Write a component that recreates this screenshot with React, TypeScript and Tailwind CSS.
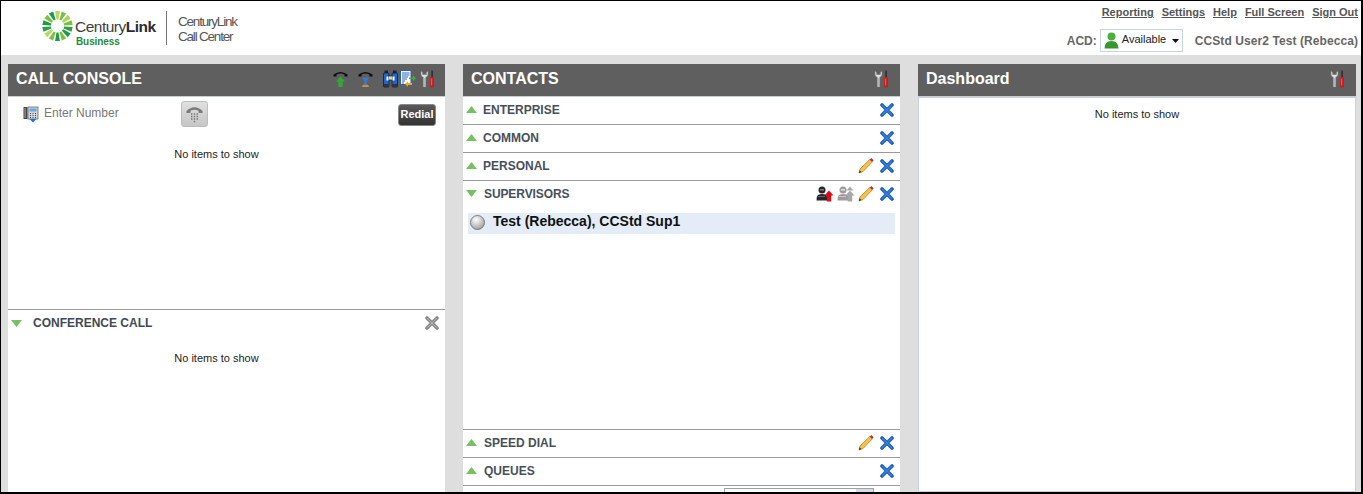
import React from "react";

const font = { fontFamily: '"Liberation Sans", Arial, sans-serif' };

function Tools() {
  return (
    <svg width="16" height="18" viewBox="0 0 16 18" className="shrink-0">
      <path d="M1 1 L1 4.5 Q1 6.6 3.2 7.2 L3.2 17 L5.8 17 L5.8 7.2 Q8 6.6 8 4.5 L8 1 L6.4 2.4 L6.4 4.5 L2.6 4.5 L2.6 2.4 Z" fill="#dedede" stroke="#777" strokeWidth="0.5" />
      <path d="M4.2 8 L4.2 16.5" stroke="#9c9c9c" strokeWidth="0.9" />
      <rect x="11.4" y="0.5" width="1.4" height="6.5" fill="#2a2a2a" />
      <rect x="10.2" y="7" width="3.8" height="10.5" rx="1" fill="#d2171d" />
      <rect x="11.2" y="8.5" width="0.9" height="7" fill="#f06a6a" />
    </svg>
  );
}

function BlueX() {
  return (
    <svg width="14" height="14" viewBox="0 0 14 14" className="shrink-0">
      <path d="M2 2 L12 12 M12 2 L2 12" stroke="#1d5fc0" strokeWidth="3.6" strokeLinecap="round" />
      <path d="M2.5 2.5 L11.5 11.5 M11.5 2.5 L2.5 11.5" stroke="#3f80dc" strokeWidth="1.2" strokeLinecap="round" />
    </svg>
  );
}

function GrayX() {
  return (
    <svg width="14" height="14" viewBox="0 0 14 14" className="shrink-0">
      <path d="M2 2 L12 12 M12 2 L2 12" stroke="#8b8b8b" strokeWidth="3.6" strokeLinecap="round" />
      <path d="M2.5 2.5 L11.5 11.5 M11.5 2.5 L2.5 11.5" stroke="#b5b5b5" strokeWidth="1" strokeLinecap="round" />
    </svg>
  );
}

function Pencil() {
  return (
    <svg width="16" height="17" viewBox="0 0 16 17" className="shrink-0">
      <path d="M1 16 L2 12 L11.8 2.4 L14.2 5 L5 14.6 Z" fill="#f4c246" stroke="#a9761c" strokeWidth="0.7" />
      <path d="M11.8 2.4 L13.4 1 L15.6 3.2 L14.2 5 Z" fill="#b5303c" />
      <path d="M1 16 L1.6 13.4 L3.4 15 Z" fill="#222" />
    </svg>
  );
}

function Person({ gray }: { gray?: boolean }) {
  const body = gray ? "#9c9c9c" : "#262626";
  const arrow = gray ? "#a8a8a8" : "#e00b12";
  return (
    <svg width="18" height="16" viewBox="0 0 18 16" className="shrink-0">
      <circle cx="6" cy="4" r="3.5" fill={body} />
      <rect x="4" y="3" width="4" height="1.6" fill={gray ? "#dcdcdc" : "#777"} />
      <path d="M0.5 14.5 L0.8 11 Q1.5 8 6 8 Q10 8 11 10 L11 14.5 Z" fill={body} />
      <path d="M2 10 H9 V11 H2 Z" fill={gray ? "#c8c8c8" : "#666"} />
      <path d="M13 4.5 L17.5 9.5 L15.2 9.5 L15.2 15.5 L10.8 15.5 L10.8 9.5 L8.5 9.5 Z" fill={arrow} />
      {gray ? <path d="M13 0.5 L16.5 4.5 L9.5 4.5 Z" fill={arrow} /> : null}
    </svg>
  );
}

function Triangle({ down }: { down?: boolean }) {
  return (
    <svg width="11" height="7" viewBox="0 0 11 7" className="shrink-0">
      <path d={down ? "M0 0 L11 0 L5.5 7 Z" : "M0 7 L11 7 L5.5 0 Z"} fill="#77c062" />
    </svg>
  );
}

function Handset() {
  return <path d="M0.5 4.5 Q7.5 -0.5 14.5 4.5 L14.5 6.5 L11.5 6.5 L11.5 4.6 Q7.5 2.4 3.5 4.6 L3.5 6.5 L0.5 6.5 Z" fill="#0d0d0d" />;
}

function PhoneUp() {
  return (
    <svg width="15" height="18" viewBox="0 0 15 18" className="shrink-0">
      <Handset />
      <path d="M7.5 6.5 L12 11.5 L9.7 11.5 L9.7 17 L5.3 17 L5.3 11.5 L3 11.5 Z" fill="#33a838" />
    </svg>
  );
}

function PhoneWait() {
  return (
    <svg width="15" height="18" viewBox="0 0 15 18" className="shrink-0">
      <Handset />
      <path d="M4 7.5 L11 7.5 L8.4 12 L11 17 L4 17 L6.6 12 Z" fill="#3f78c5" />
      <path d="M4.8 15 L10.2 15 L11 17 L4 17 Z" fill="#d18f2f" />
    </svg>
  );
}

function Binoculars() {
  return (
    <svg width="15" height="18" viewBox="0 0 15 18" className="shrink-0">
      <rect x="1.5" y="0.5" width="3.5" height="3" fill="#222" />
      <rect x="10" y="0.5" width="3.5" height="3" fill="#222" />
      <rect x="0.5" y="3" width="5.5" height="14" rx="1" fill="#1f66cc" stroke="#111" strokeWidth="0.7" />
      <rect x="9" y="3" width="5.5" height="14" rx="1" fill="#1f66cc" stroke="#111" strokeWidth="0.7" />
      <rect x="5.5" y="6" width="4" height="4" fill="#cfcfcf" stroke="#111" strokeWidth="0.6" />
      <rect x="3.5" y="6.5" width="2" height="4" fill="#fff" />
      <rect x="9.5" y="6.5" width="2" height="4" fill="#fff" />
      <rect x="0.8" y="14" width="4.8" height="3" fill="#333" />
      <rect x="9.3" y="14" width="4.8" height="3" fill="#333" />
    </svg>
  );
}

function Transfer() {
  return (
    <svg width="16" height="18" viewBox="0 0 16 18" className="shrink-0">
      <rect x="0.5" y="0.5" width="10.5" height="14" fill="#fff" stroke="#2a62b8" />
      <path d="M2 3 H9.5 M2 5 H9.5 M2 7 H8 M2 9 H7 M2 11 H5 M2 13 H4" stroke="#2a62b8" strokeWidth="1.1" />
      <path d="M9 7.5 H13 V5.5 L16 8.2 L13 11 V9 H9 Z" fill="#3db13d" />
      <path d="M12 13 H8 V11.2 L5 14 L8 16.8 V15 H12 Z" fill="#efa91e" />
    </svg>
  );
}

function DeskPhone() {
  return (
    <svg width="16" height="17" viewBox="0 0 16 17" className="shrink-0">
      <rect x="0.5" y="1" width="4" height="12" fill="#444" />
      <rect x="1.5" y="2" width="1.2" height="10" fill="#999" />
      <rect x="5" y="1" width="10" height="12" fill="#d3d6da" stroke="#555" strokeWidth="0.7" />
      <rect x="6.5" y="2.5" width="7" height="3" fill="#6aa5dc" />
      <path d="M7 7.5 H8 M9.5 7.5 H10.5 M12 7.5 H13 M7 9.5 H8 M9.5 9.5 H10.5 M12 9.5 H13 M7 11.5 H8 M9.5 11.5 H10.5 M12 11.5 H13" stroke="#444" />
      <path d="M6.5 13 L13.5 13 L10 16.5 Z" fill="#1f6fd0" />
    </svg>
  );
}

function DialButton() {
  return (
    <div className="w-[27px] h-[26px] rounded-[3px] border border-[#bdbdbd] bg-gradient-to-b from-[#e0e0e0] to-[#c6c6c6] flex items-center justify-center">
      <svg width="17" height="18" viewBox="0 0 17 18">
        <path d="M0.5 6 Q8.5 -1.5 16.5 6 L16.5 8 L12.8 8 L12.3 5.6 Q8.5 4 4.7 5.6 L4.2 8 L0.5 8 Z" fill="#7a7a7a" />
        <path d="M5 9 H6.4 M7.8 9 H9.2 M10.6 9 H12 M5 11.5 H6.4 M7.8 11.5 H9.2 M10.6 11.5 H12 M5 14 H6.4 M7.8 14 H9.2 M10.6 14 H12 M7.8 16.5 H9.2" stroke="#777" strokeWidth="1.3" />
      </svg>
    </div>
  );
}

function Logo() {
  const rays = Array.from({ length: 14 }, (_, i) => (i * 360) / 14);
  const colors = ["#b5d96a", "#7ac143", "#a9d45c", "#7ac143", "#2f9e44", "#1e9a46", "#7ac143", "#1e9a46", "#7ac143", "#b5d96a", "#2f9e44", "#1e9a46", "#7ac143", "#1e9a46"];
  return (
    <div className="flex items-start">
      <svg width="31" height="32" viewBox="0 0 30 32" className="shrink-0">
        {rays.map((a, i) => (
          <path key={a} d="M12.6 1 L17.4 1 L16 9.5 L14 9.5 Z" fill={colors[i]} transform={`rotate(${a} 15 16)`} />
        ))}
      </svg>
      <div className="ml-[2px] mt-[9px] flex flex-col w-[92px]">
        <div className="text-[15.5px] leading-[16px] tracking-[-0.5px] text-[#3e3e3e] whitespace-nowrap">
          Century<span className="font-bold text-[#2c2c2c]">Link</span>
        </div>
        <div className="ml-[1px] text-[10px] tracking-[-0.1px] leading-[12px] mt-[1px] font-bold text-[#1f8a3c]">Business</div>
      </div>
    </div>
  );
}

function Section({ title, down, children, dark, gap = "ml-[6px]" }: { title: string; down?: boolean; children?: React.ReactNode; dark?: boolean; gap?: string }) {
  return (
    <div className="h-[28px] border-b border-[#9a9a9a] flex items-center pl-[3px] pr-[6px] pb-[2px] shrink-0">
      <Triangle down={down} />
      <span className={`${gap} text-[12px] font-bold ${dark ? "text-[#3f4a55]" : "text-[#46505a]"}`}>{title}</span>
      <div className="ml-auto flex items-center gap-[6px]">{children}</div>
    </div>
  );
}

function PanelHeader({ title, children, pr }: { title: string; children?: React.ReactNode; pr: string }) {
  return (
    <div className={`h-[33px] bg-[#5f5f5f] border-b border-[#c9ccd0] flex items-center pl-[8px] ${pr} pb-[2px] shrink-0`}>
      <span className="text-[16px] font-bold text-white">{title}</span>
      <div className="ml-auto flex items-center">{children}</div>
    </div>
  );
}

function Empty({ className = "" }: { className?: string }) {
  return <div className={`text-[11px] text-[#222] text-center ${className}`}>No items to show</div>;
}

export default function App() {
  return (
    <div style={font} className="w-[1363px] h-[494px] overflow-hidden bg-[#dedede] border-t border-l border-r-2 border-b-2 border-black flex flex-col">
      <header className="h-[54px] bg-white flex shrink-0">
        <div className="pl-[41px] pt-[9px]">
          <Logo />
        </div>
        <div className="ml-[-1px] mt-[10px] w-px h-[34px] bg-[#777]" />
        <div className="ml-[11px] mt-[13px] text-[13.5px] leading-[15px] tracking-[-1.2px] text-[#555]">
          <div>CenturyLink</div>
          <div>Call Center</div>
        </div>
        <div className="ml-auto pr-[3px] flex flex-col items-end">
          <div className="mt-[5px] flex gap-[8px] text-[11px] font-bold text-[#555] underline leading-[13px]">
            <span>Reporting</span>
            <span>Settings</span>
            <span>Help</span>
            <span>Full Screen</span>
            <span>Sign Out</span>
          </div>
          <div className="mt-[10px] flex items-center">
            <span className="text-[12px] font-bold text-[#666]">ACD:</span>
            <div className="ml-[3px] w-[83px] h-[23px] border border-[#c8d4e2] flex items-center pl-[3px]">
              <svg width="15" height="17" viewBox="0 0 15 17" className="shrink-0">
                <circle cx="7.5" cy="4.5" r="4" fill="#4cae3c" />
                <path d="M0.5 16.5 Q0.5 9 7.5 9 Q14.5 9 14.5 16.5 Z" fill="#35982f" />
              </svg>
              <span className="ml-[3px] text-[11px] text-[#222] mb-[3px]">Available</span>
              <svg width="7" height="4" viewBox="0 0 7 4" className="ml-auto mr-[3px]">
                <path d="M0 0 H7 L3.5 4 Z" fill="#111" />
              </svg>
            </div>
            <span className="ml-[12px] text-[12px] tracking-[0.08px] font-bold text-[#666]">CCStd User2 Test (Rebecca)</span>
          </div>
        </div>
      </header>

      <main className="flex-1 min-h-0 flex gap-[18px] pl-[7px] pr-[5px] pt-[9px]">
        <section className="w-[437px] flex flex-col min-h-0">
          <PanelHeader title="CALL CONSOLE" pr="pr-[9px]">
            <div className="flex items-center">
              <PhoneUp />
              <div className="w-[10px]" />
              <PhoneWait />
              <div className="w-[10px]" />
              <Binoculars />
              <div className="w-[2px]" />
              <Transfer />
              <div className="w-[4px]" />
              <Tools />
            </div>
          </PanelHeader>
          <div className="flex-1 min-h-0 bg-white flex flex-col">
            <div className="h-[213px] border-b border-[#9a9a9a] shrink-0">
              <div className="flex items-center pl-[15px] pr-[9px] pt-[4px]">
                <DeskPhone />
                <span className="ml-[5px] mb-[2px] text-[12px] text-[#777] w-[137px]">Enter Number</span>
                <DialButton />
                <button className="ml-auto w-[38px] h-[22px] mt-[1px] rounded-[3px] bg-gradient-to-b from-[#5a5a5a] to-[#333333] border border-[#888] text-white text-[11px] font-bold">Redial</button>
              </div>
              <Empty className="mt-[19px] pr-[20px]" />
            </div>
            <div className="h-[26px] flex items-center pl-[3px] pr-[6px] shrink-0">
              <Triangle down />
              <span className="ml-[11px] text-[12px] font-bold text-[#3f4a55]">CONFERENCE CALL</span>
              <div className="ml-auto"><GrayX /></div>
            </div>
            <Empty className="mt-[14px] pr-[20px]" />
          </div>
        </section>

        <section className="w-[437px] flex flex-col min-h-0">
          <PanelHeader title="CONTACTS" pr="pr-[10px]">
            <Tools />
          </PanelHeader>
          <div className="flex-1 min-h-0 bg-white flex flex-col overflow-hidden">
            <Section title="ENTERPRISE"><BlueX /></Section>
            <Section title="COMMON"><BlueX /></Section>
            <Section title="PERSONAL"><Pencil /><BlueX /></Section>
            <div className="h-[249px] border-b border-[#9a9a9a] shrink-0">
              <div className="h-[27px] flex items-center pl-[3px] pr-[6px] pb-[2px]">
                <Triangle down />
                <span className="ml-[7px] text-[12px] font-bold tracking-[-0.1px] text-[#46505a]">SUPERVISORS</span>
                <div className="ml-auto flex items-center">
                  <Person />
                  <div className="w-[3px]" />
                  <Person gray />
                  <div className="w-[3px]" />
                  <Pencil />
                  <div className="w-[6px]" />
                  <BlueX />
                </div>
              </div>
              <div className="mx-[5px] mt-[5px] h-[21px] bg-[#e3ecf7] flex items-center pl-[2px] pb-[2px]">
                <svg width="15" height="15" viewBox="0 0 15 15" className="shrink-0">
                  <defs>
                    <radialGradient id="ball" cx="40%" cy="30%" r="75%">
                      <stop offset="0%" stopColor="#ffffff" />
                      <stop offset="100%" stopColor="#9b9b9b" />
                    </radialGradient>
                  </defs>
                  <circle cx="7.5" cy="7.5" r="7" fill="url(#ball)" stroke="#666" strokeWidth="0.8" />
                </svg>
                <span className="ml-[8px] mb-[2px] text-[14px] font-bold text-[#111]">Test (Rebecca), CCStd Sup1</span>
              </div>
            </div>
            <Section title="SPEED DIAL" gap="ml-[7px]"><Pencil /><BlueX /></Section>
            <Section title="QUEUES" gap="ml-[7px]"><BlueX /></Section>
            <div className="h-[6px] flex justify-end pr-[26px] pt-[2px] shrink-0">
              <div className="w-[150px] h-[10px] border border-[#9aa3ad] flex">
                <div className="flex-1" />
                <div className="w-[17px] bg-[#d5dfec]" />
              </div>
            </div>
          </div>
        </section>

        <section className="w-[438px] flex flex-col min-h-0">
          <PanelHeader title="Dashboard" pr="pr-[10px]">
            <Tools />
          </PanelHeader>
          <div className="flex-1 min-h-0 bg-white border border-[#c9d3e0] pt-[8px]">
            <Empty />
          </div>
        </section>
      </main>
    </div>
  );
}
